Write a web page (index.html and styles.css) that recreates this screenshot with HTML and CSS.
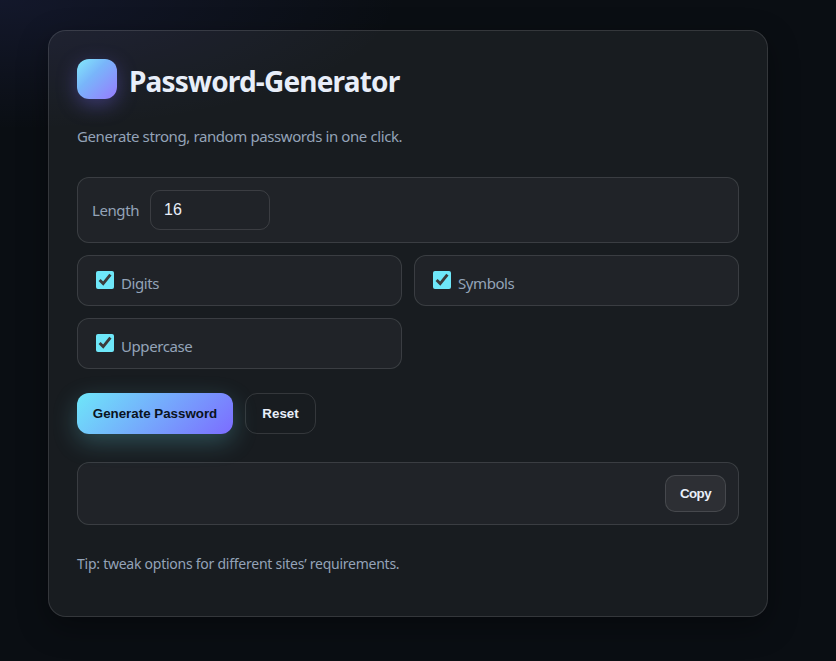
FILE: index.html
```html
<!DOCTYPE html>
<html lang="en">
<head>
<meta charset="utf-8">
<title>Password-Generator</title>
<link rel="stylesheet" href="styles.css">
</head>
<body>
<main class="card">
  <header class="header">
    <span class="logo"></span>
    <h1 class="title">Password-Generator</h1>
  </header>
  <p class="subtitle">Generate strong, random passwords in one click.</p>
  <form class="options">
    <div class="field field-wide">
      <label class="length-label" for="length">Length</label>
      <input class="length" id="length" type="text" value="16">
    </div>
    <label class="field"><input type="checkbox" checked><span>Digits</span></label>
    <label class="field"><input type="checkbox" checked><span>Symbols</span></label>
    <label class="field"><input type="checkbox" checked><span>Uppercase</span></label>
  </form>
  <div class="actions">
    <button class="btn primary">Generate Password</button>
    <button class="btn ghost">Reset</button>
  </div>
  <div class="output">
    <button class="copy">Copy</button>
  </div>
  <p class="tip">Tip: tweak options for different sites’ requirements.</p>
</main>
</body>
</html>
```
FILE: styles.css
```css
* { box-sizing: border-box; }

body {
  margin: 0;
  min-height: 661px;
  padding: 30px 68px 44px 48px;
  background: radial-gradient(400px 130px at 0 0, rgba(100, 108, 255, .1), transparent 100%), #0a0e13;
  color: #e8eef9;
  font-family: "Noto Sans", sans-serif;
  font-size: 15px;
  overflow: hidden;
}

.card {
  width: 720px;
  height: 587px;
  padding: 28px;
  border: 1px solid rgba(255, 255, 255, .12);
  border-radius: 18px;
  background: rgba(255, 255, 255, .06);
  box-shadow: 0 10px 30px rgba(0, 0, 0, .35);
}

.header { display: flex; gap: 12px; height: 44px; }

.logo {
  width: 40px;
  height: 40px;
  border-radius: 12px;
  background: linear-gradient(135deg, #83e9fb, #79b5fa 40%, #9284fd 90%);
  box-shadow: 0 6px 20px rgba(124, 108, 255, .35);
}

.title { margin: 0; font-size: 28px; line-height: 44px; font-weight: 700; letter-spacing: -.82px; white-space: nowrap; }

.subtitle { margin: 21px 0 29px; height: 24px; line-height: 24px; letter-spacing: -.4px; color: #94a3b8; }

.options { display: grid; grid-template-columns: 1fr 1fr; gap: 12px; }

.field {
  display: flex;
  align-items: center;
  height: 51px;
  padding: 0 14px 2px;
  border: 1px solid rgba(255, 255, 255, .12);
  border-radius: 12px;
  background: rgba(220, 240, 255, .04);
  color: #94a3b8;
  letter-spacing: -.42px;
}

.field-wide { grid-column: 1 / -1; height: 66px; padding-bottom: 0; gap: 12px; }

.length-label { width: 46px; }

.field span { padding-top: 6px; }

.field input[type="checkbox"] {
  width: 18px;
  height: 18px;
  margin: 0 7px 0 4px;
  accent-color: #6ee7f9;
}

.length {
  width: 120px;
  height: 40px;
  padding: 0 13px 1px;
  border: 1px solid rgba(255, 255, 255, .12);
  border-radius: 10px;
  background: transparent;
  color: #e8eef9;
  font: 16px "Liberation Sans", sans-serif;
}

.actions { display: flex; gap: 12px; margin-top: 24px; }

.btn {
  height: 41px;
  padding: 0;
  border-radius: 12px;
  font: 700 13.333px "Liberation Sans", sans-serif;
}

.primary {
  width: 156px;
  border: 0;
  background: linear-gradient(135deg, #6ee7f9, #7c6cff);
  color: #0a1320;
  box-shadow: 0 8px 24px rgba(110, 231, 249, .25);
}

.ghost { width: 71px; border: 1px solid rgba(255, 255, 255, .12); background: transparent; color: #e8eef9; }

.output {
  display: flex;
  justify-content: flex-end;
  align-items: center;
  height: 63px;
  margin-top: 28px;
  padding: 0 12px;
  border: 1px solid rgba(255, 255, 255, .12);
  border-radius: 12px;
  background: rgba(220, 240, 255, .04);
}

.copy {
  width: 61px;
  height: 37px;
  padding: 0;
  border: 1px solid rgba(255, 255, 255, .12);
  border-radius: 10px;
  background: rgba(255, 255, 255, .06);
  color: #e8eef9;
  font: 700 13.333px "Liberation Sans", sans-serif;
  letter-spacing: -.6px;
}

.tip { margin: 28px 0 0; font-size: 14px; line-height: 22px; letter-spacing: -.25px; color: #94a3b8; }
```
